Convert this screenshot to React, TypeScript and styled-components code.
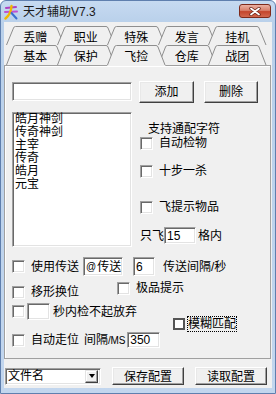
import styled, { createGlobalStyle, css } from 'styled-components'

const GlobalStyle = createGlobalStyle`
  html, body { margin: 0; padding: 0; background: #fff; }
  body {
    font-family: "Liberation Sans", "Noto Sans CJK SC", sans-serif;
    font-size: 12px;
    line-height: 14px;
    color: #000;
  }
  * { box-sizing: border-box; }
`

const TOP_TABS = ['丢赠', '职业', '特殊', '发言', '挂机']
const BOTTOM_TABS = ['基本', '保护', '飞捡', '仓库', '战团']
const ITEMS = ['皓月神剑', '传奇神剑', '主宰', '传奇', '皓月', '元宝']

const PITCH = 50.5
const SLANT = 8

const sunken = css`
  background: #fff;
  border: 1px solid;
  border-color: #a0a0a0 #fff #fff #a0a0a0;
  box-shadow: inset 1px 1px 0 #696969, inset -1px -1px 0 #e3e3e3;
`

const Window = styled.div`
  width: 276px;
  height: 394px;
  display: flex;
  flex-direction: column;
  background: linear-gradient(#c6daf1, #b9d0ea 22px, #c2d6ee);
  border: 1px solid #5f7fae;
  border-radius: 6px 6px 0 0;
  padding: 0 3px 5px;
`

const TitleBar = styled.div`
  height: 21px;
  flex: none;
  display: flex;
  align-items: center;
`

const AppIconSvg = styled.svg`
  margin-left: -1px;
  flex: none;
`

const Title = styled.span`
  margin-left: 4px;
  margin-top: 1px;
  font-size: 12px;
  color: #1a1a1a;
`

const CloseButton = styled.div`
  align-self: flex-start;
  margin: 3px 1px 0 auto;
  width: 32px;
  height: 14px;
  border: 1px solid #7e2a1b;
  border-radius: 3px;
  background: linear-gradient(#eab0a2 0%, #d8806c 45%, #c4452c 55%, #d2684e 100%);
  display: flex;
  align-items: center;
  justify-content: center;
`

const Client = styled.div`
  flex: 1;
  background: #f0f0f0;
  display: flex;
  flex-direction: column;
`

const TabStrip = styled.div`
  position: relative;
  z-index: 2;
  padding-top: 4px;
`

const TabRow = styled.div<{ $height: number; $layer: number }>`
  position: relative;
  z-index: ${p => p.$layer};
  height: ${p => p.$height}px;
  display: flex;
  padding-left: 2px;
`

const Tab = styled.div<{ $z: number }>`
  position: relative;
  z-index: ${p => p.$z};
  flex: none;
  width: ${PITCH}px;
  padding: 2px 0 0 ${SLANT}px;
  display: flex;
  align-items: center;
  justify-content: center;
`

const TabSvg = styled.svg`
  position: absolute;
  left: 0;
  top: 0;
  overflow: visible;
`

const TabLabel = styled.span`
  position: relative;
  font-family: "Noto Sans CJK SC", sans-serif;
  font-size: 12px;
  line-height: 14px;
`

const Panel = styled.div`
  height: 294px;
  flex: none;
  margin-right: 1px;
  border: 1px solid #a0a0a0;
  box-shadow: inset 1px 1px 0 #fff;
  padding: 14px 0 0 7px;
  display: flex;
  flex-direction: column;
`

const Row = styled.div<{ $mt?: number; $h: number; $pl?: number }>`
  display: flex;
  align-items: center;
  height: ${p => p.$h}px;
  margin-top: ${p => p.$mt ?? 0}px;
  padding-left: ${p => p.$pl ?? 0}px;
  flex: none;
`

const TextBox = styled.div<{ $w: number; $h: number; $ml?: number }>`
  ${sunken}
  width: ${p => p.$w}px;
  height: ${p => p.$h}px;
  margin-left: ${p => p.$ml ?? 0}px;
  padding-left: 2px;
  display: flex;
  align-items: center;
  flex: none;
  font-size: 12px;
  white-space: nowrap;
  overflow: hidden;
`

const PushButton = styled.div<{ $w: number; $h: number; $ml?: number }>`
  width: ${p => p.$w}px;
  height: ${p => p.$h}px;
  margin-left: ${p => p.$ml ?? 0}px;
  flex: none;
  background: #f0f0f0;
  border: 1px solid;
  border-color: #fff #404040 #404040 #fff;
  box-shadow: inset -1px -1px 0 #a0a0a0, inset 1px 1px 0 #e8e8e8;
  display: flex;
  align-items: center;
  justify-content: center;
  padding-top: 1px;
`

const Split = styled.div`
  display: flex;
  gap: 8px;
  margin-top: 9px;
  flex: none;
`

const ListBox = styled.div`
  ${sunken}
  width: 120px;
  height: 135px;
  padding: 0 2px;
  flex: none;
`

const ListItem = styled.div`
  line-height: 13px;
  height: 13px;
  white-space: nowrap;
`

const Options = styled.div`
  display: flex;
  flex-direction: column;
`

const Hint = styled.div`
  margin: 10px 0 0 8px;
  line-height: 14px;
`

const CheckRow = styled.div<{ $mt?: number; $ml?: number }>`
  display: flex;
  align-items: center;
  height: 14px;
  margin-top: ${p => p.$mt ?? 0}px;
  margin-left: ${p => p.$ml ?? 0}px;
  flex: none;
`

const CheckBox = styled.div`
  ${sunken}
  width: 13px;
  height: 13px;
  flex: none;
`

const FocusBox = styled.div`
  width: 12px;
  height: 12px;
  flex: none;
  background: #fff;
  border: 2px solid #555;
`

const Label = styled.span<{ $ml?: number }>`
  margin-left: ${p => p.$ml ?? 6}px;
  white-space: nowrap;
`

const FocusLabel = styled.span`
  margin-left: 3px;
  outline: 1px dotted #000;
  outline-offset: 0;
  line-height: 14px;
  white-space: nowrap;
`

const Small = styled.span`
  font-size: 10px;
  letter-spacing: -0.2px;
`

const Narrow = styled.span`
  font-size: 10px;
  margin-right: 1px;
`

const Stagger = styled.div`
  display: flex;
  align-items: flex-start;
  height: 15px;
  margin-top: 8px;
  flex: none;
`

const BottomBar = styled.div`
  display: flex;
  align-items: center;
  height: 18px;
  margin-top: 8px;
  flex: none;
`

const Combo = styled.div`
  ${sunken}
  width: 96px;
  height: 17px;
  margin-left: 1px;
  display: flex;
  align-items: center;
  padding: 0 2px 0 2px;
  flex: none;
`

const ComboText = styled.span`
  flex: 1;
`

const DropButton = styled.div`
  width: 13px;
  height: 13px;
  background: #f0f0f0;
  border: 1px solid;
  border-color: #e3e3e3 #404040 #404040 #e3e3e3;
  box-shadow: inset -1px -1px 0 #a0a0a0, inset 1px 1px 0 #fff;
  display: flex;
  align-items: center;
  justify-content: center;
`

const Arrow = styled.div`
  width: 0;
  height: 0;
  border-left: 3.5px solid transparent;
  border-right: 3.5px solid transparent;
  border-top: 4px solid #000;
`

function AppIcon() {
  return (
    <AppIconSvg width="16" height="16" viewBox="0 0 16 16">
      <path d="M3 4 L13 3" stroke="#b040c0" strokeWidth="2" strokeLinecap="round" />
      <path d="M2 8 L14 7.5" stroke="#c050d0" strokeWidth="2" strokeLinecap="round" />
      <path d="M8.5 2 Q8 10 2.5 14.5" stroke="#f0b800" strokeWidth="2.4" fill="none" strokeLinecap="round" />
      <path d="M8.5 9 L13.5 14.5" stroke="#3a6fd0" strokeWidth="2" strokeLinecap="round" />
    </AppIconSvg>
  )
}

function CloseGlyph() {
  return (
    <svg width="12" height="9" viewBox="0 0 12 9">
      <path d="M2 1.5 L10 7.5 M10 1.5 L2 7.5" stroke="#6a2418" strokeWidth="3.4" strokeLinecap="round" />
      <path d="M2 1.5 L10 7.5 M10 1.5 L2 7.5" stroke="#fff" strokeWidth="1.8" strokeLinecap="round" />
    </svg>
  )
}

function TabItem({ label, index, height, active }: { label: string; index: number; height: number; active?: boolean }) {
  const w = PITCH + SLANT
  const h = active ? height + 1 : height
  const outline = `M0.5 ${height} L${SLANT - 0.5} 2 Q${SLANT} 0.5 ${SLANT + 1.5} 0.5 L${PITCH - 1.5} 0.5 Q${PITCH} 0.5 ${PITCH + 0.5} 2 L${w - 0.5} ${height}`
  return (
    <Tab $z={active ? 10 : index + 1}>
      <TabSvg width={w} height={h}>
        <path d={`${outline} L${w} ${h} L0 ${h} Z`} fill="#f0f0f0" />
        <path d={outline} fill="none" stroke="#8e8e8e" />
      </TabSvg>
      <TabLabel>{label}</TabLabel>
    </Tab>
  )
}

export default function App() {
  return (
    <>
      <GlobalStyle />
      <Window>
        <TitleBar>
          <AppIcon />
          <Title>天才辅助V7.3</Title>
          <CloseButton>
            <CloseGlyph />
          </CloseButton>
        </TitleBar>
        <Client>
          <TabStrip>
            <TabRow $height={19} $layer={1}>
              {TOP_TABS.map((t, i) => (
                <TabItem key={t} label={t} index={i} height={19} />
              ))}
            </TabRow>
            <TabRow $height={20} $layer={2}>
              {BOTTOM_TABS.map((t, i) => (
                <TabItem key={t} label={t} index={i} height={20} active={t === '飞捡'} />
              ))}
            </TabRow>
          </TabStrip>
          <Panel>
            <Row $h={23}>
              <TextBox $w={120} $h={19} />
              <PushButton $w={55} $h={22} $ml={7}>添加</PushButton>
              <PushButton $w={54} $h={22} $ml={10}>删除</PushButton>
            </Row>
            <Split>
              <ListBox>
                {ITEMS.map(item => (
                  <ListItem key={item}>{item}</ListItem>
                ))}
              </ListBox>
              <Options>
                <Hint>支持通配字符</Hint>
                <CheckRow>
                  <CheckBox />
                  <Label>自动检物</Label>
                </CheckRow>
                <CheckRow $mt={14}>
                  <CheckBox />
                  <Label>十步一杀</Label>
                </CheckRow>
                <CheckRow $mt={22}>
                  <CheckBox />
                  <Label>飞提示物品</Label>
                </CheckRow>
                <Row $h={17} $mt={13}>
                  <span>只飞</span>
                  <TextBox $w={32} $h={17}>15</TextBox>
                  <Label $ml={2}>格内</Label>
                </Row>
              </Options>
            </Split>
            <Row $h={19} $mt={10}>
              <CheckBox />
              <Label>使用传送</Label>
              <TextBox $w={40} $h={19} $ml={4}>
                <Narrow>@</Narrow>传送
              </TextBox>
              <TextBox $w={22} $h={19} $ml={10}>6</TextBox>
              <Label $ml={8}>传送间隔/秒</Label>
            </Row>
            <Stagger>
              <CheckRow $mt={1}>
                <CheckBox />
                <Label>移形换位</Label>
              </CheckRow>
              <CheckRow $mt={-3} $ml={38}>
                <CheckBox />
                <Label>极品提示</Label>
              </CheckRow>
            </Stagger>
            <Row $h={17} $mt={4}>
              <CheckBox />
              <TextBox $w={23} $h={17} $ml={2} />
              <Label $ml={3}>秒内检不起放弃</Label>
            </Row>
            <Row $h={14} $mt={-3} $pl={161}>
              <FocusBox />
              <FocusLabel>模糊匹配</FocusLabel>
            </Row>
            <Row $h={16} $mt={1}>
              <CheckBox />
              <Label>自动走位</Label>
              <Label $ml={5}>
                间隔<Small>/MS</Small>
              </Label>
              <TextBox $w={33} $h={16} $ml={2}>350</TextBox>
            </Row>
          </Panel>
          <BottomBar>
            <Combo>
              <ComboText>文件名</ComboText>
              <DropButton>
                <Arrow />
              </DropButton>
            </Combo>
            <PushButton $w={72} $h={18} $ml={11}>保存配置</PushButton>
            <PushButton $w={72} $h={18} $ml={11}>读取配置</PushButton>
          </BottomBar>
        </Client>
      </Window>
    </>
  )
}
